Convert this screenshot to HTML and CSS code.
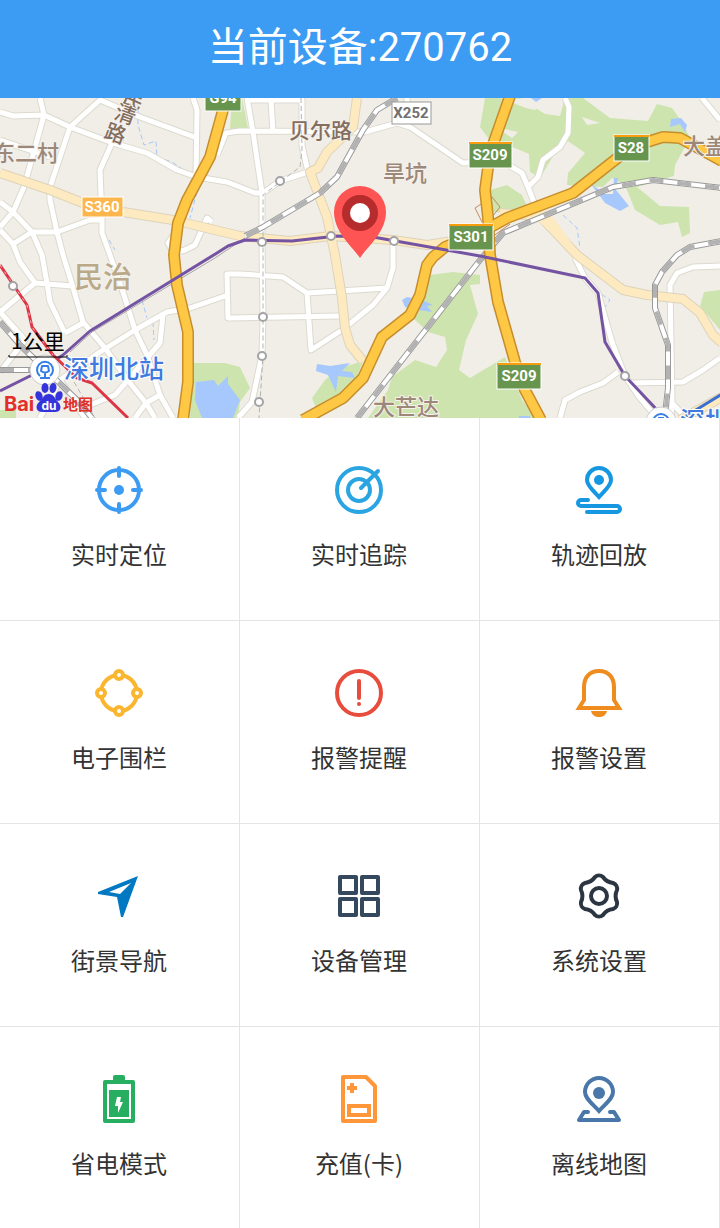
FILE: index.html
```html
<!DOCTYPE html>
<html lang="zh-CN">
<head>
    <meta charset="UTF-8">
    <meta name="viewport" content="width=device-width, initial-scale=1.0">
    <title>当前设备</title>
    <link rel="stylesheet" href="styles.css">
</head>
<body>

    <header>
        <h1>当前设备:270762</h1>
    </header>

    <main>
        <svg class="map" viewBox="0 98 720 320" preserveAspectRatio="xMidYMid slice" role="img" aria-label="地图">
            <defs>
                <!-- Minor roads -->
                <g id="streets">
                    <path d="M40 98L44 115L24 187L13 212L0 227M0 112L13 116L44 115L70 127L113 143L147 153L177 170L197 177L227 182L240 187L255 193L263 193L280 181L308 172"/>
                    <path d="M140 117L100 100L70 127L50 187L50 200L57 232L63 255L72 284L83 322L105 348L130 383L146 403L155 418M140 117L197 138M193 98L197 110L196 177L184 203L179 228L168 243L174 253L185 250L195 245L207 218L212 222"/>
                    <path d="M112 143L100 170L102 220L102 233L110 255L123 292L135 330L147 355L160 395L173 418M0 202L13 212L32 232L57 232L90 220L102 220M32 232L13 244L0 230M32 232L42 255L47 283L50 302L65 333M13 244L20 262L35 283L72 286M35 283L0 312"/>
                    <path d="M65 333L85 322M60 380L100 352L135 330L167 312L190 308L228 295M163 315L160 343L115 395L90 405M0 140L50 157M0 312L25 340L0 372M40 418L60 380L85 418M146 403L135 418M146 403L160 395"/>
                    <path d="M240 274L227 274L228 318L340 316M240 274L283 277L307 293L387 288L393 268L393 240M307 293L311 350L342 330L373 305L387 288"/>
                    <path d="M247 98L253 132L262 193L262 242L263 317L262 355L252 402L238 418M250 100L302 100L302 145L308 172M271 100L273 133M217 155L226 133L240 131L365 132L397 123L410 127L463 163L480 162M407 98L408 125"/>
                    <path d="M702 98L720 120M565 98L569 107L568 133L560 147L543 160L538 177L528 187L537 210M500 160L522 173L528 187"/>
                    <path d="M671 418L672 403L670 285L677 273L693 267L720 266M630 383L683 382L703 370L720 358M560 418L565 400L580 392L603 383L618 372M575 258L585 278L598 293L612 342L625 376L640 398L657 418M672 403L686 418"/>
                </g>
                <g id="county">
                    <path d="M0 173L50 190L83 203L123 212L173 220L240 236L290 241L330 236L393 240L427 245L460 240"/>
                    <path d="M357 98L353 127L327 152L318 168L310 172L327 217L335 255L342 298L345 328L350 345L363 361"/>
                    <path d="M500 213L540 216L577 255L623 290L647 295L683 299L700 313L713 335L722 343"/>
                    <path d="M680 420L722 397"/>
                </g>
                <g id="railways">
                    <path d="M397 98L377 110L363 130L337 177L320 193L263 227L245 236"/>
                    <path d="M357 418L480 260L503 233L527 223L613 187L653 180L722 188"/>
                    <path d="M722 241L690 247L677 255L662 272L655 285L655 308L668 345L668 388L665 414"/>
                    <path d="M0 322L20 345L77 400L92 418M0 370L30 370L45 374"/>
                </g>
                <path id="g94" d="M227 98L223 110L210 157L187 200L178 223L174 255L177 285L188 332L188 382L183 420"/>
                <path id="s28" d="M722 161L680 138L663 137L647 142L625 152L573 193L507 218L480 233L445 247L433 257L427 265L420 295L410 315L382 337L363 378L343 398L303 420"/>
                <path id="s209" d="M510 96L490 153L485 190L488 217L490 255L498 302L515 362L525 390L541 420"/>
            </defs>

            <rect class="land" y="98" width="720" height="320"/>

            <!-- Parks -->
            <g class="park">
                <path d="M228 98H242L248 128L230 130L231 112Z"/>
                <path d="M485 98H520L545 114L560 116L565 98H583L610 118L648 121L657 104L672 108L682 122L690 138L675 165L674 176L637 187L660 206L689 207L690 233L682 237L678 222L660 225L635 210L625 185L612 178L603 187L567 185L568 173L585 153L568 141L555 153L540 178L530 172L529 154L510 146L500 154L480 127Z"/>
                <path d="M490 190L507 185L522 195L528 208L510 214L488 211Z"/>
                <path d="M430 275L453 272L480 275L480 284L470 285L478 314L466 340L459 370L470 378L480 372L505 357L522 400L536 418H368L388 390L392 377L415 360L436 367L447 350L445 337L428 332L413 318Z"/>
                <path d="M363 361L340 368L325 380L312 398L316 408L350 395ZM193 363L225 363L240 367L250 388L240 402L238 418H190ZM720 290L704 292L700 306L720 330ZM0 410H16V418H0Z"/>
            </g>
            <path class="land" d="M585 122L582 117L600 123L587 125ZM496 127L518 132L512 138ZM500 98L545 100L535 110L526 108Z"/>

            <!-- Water -->
            <g class="water">
                <path d="M196 382L214 380L218 386L228 376L228 384L240 400L233 418H202L195 400Z"/>
                <path d="M317 364L330 366L350 363L342 371L352 372L355 378L338 376L336 392L328 375L316 371Z"/>
                <path d="M402 300L407 297L422 300L433 305L427 306L432 312L418 310L405 307Z"/>
                <path d="M591 184L605 194L613 194L614 178L618 178L616 190L629 206L620 211L605 203ZM671 119L681 118L687 125L685 132L680 124L670 127ZM531 98H542L536 102ZM519 416H530V418H519Z"/>
            </g>
            <path class="stream" d="M138 103L138 125L144 145L156 141L157 157L172 162L184 170M122 136L125 145M197 192L190 218M109 240L115 250M563 215L577 228L580 248M595 290L610 300L605 307M142 300L147 318M153 322L154 340"/>

            <use href="#streets" class="street-edge"/>
            <use href="#streets" class="street"/>
            <use href="#county" class="county-edge"/>
            <use href="#county" class="county"/>
            <path class="county" d="M530 215L548 210L580 255Z"/>
            <path class="subway-plan" d="M301 98L302 150L300 167L263 195L263 355L259 418M70 375L95 418"/>

            <use href="#railways" class="rail-edge"/>
            <use href="#railways" class="rail"/>
            <use href="#railways" class="rail-dash"/>
            <path class="rail-thin" d="M245 238L215 258L92 332L70 352"/>

            <path class="ramp" d="M482 222L475 208L492 197L500 207L492 217M488 240L510 224"/>
            <use href="#s28" class="highway-edge"/>
            <use href="#s209" class="highway-edge"/>
            <use href="#g94" class="highway-edge"/>
            <use href="#s28" class="highway"/>
            <use href="#s209" class="highway"/>
            <use href="#g94" class="highway"/>

            <!-- Metro lines -->
            <path class="metro-purple" d="M0 391L30 376L63 355L90 331L217 253L228 246L245 240L292 241L337 236L373 237L480 256L585 278L598 293L605 342L625 376L660 413"/>
            <path class="metro-red" d="M0 265L27 305L32 327L53 355L77 378L92 383L128 418"/>
            <path class="metro-red-dash" d="M0 265L27 305L32 327L53 355"/>
            <path class="metro-blue" d="M686 416L722 394"/>
            <g class="stop">
                <circle cx="280" cy="181" r="4"/>
                <circle cx="262" cy="242" r="4"/>
                <circle cx="331" cy="236" r="4"/>
                <circle cx="394" cy="241" r="4"/>
                <circle cx="263" cy="317" r="4"/>
                <circle cx="262" cy="356" r="4"/>
                <circle cx="259" cy="402" r="4"/>
                <circle cx="13" cy="286" r="4"/>
                <circle cx="625" cy="376" r="4"/>
            </g>

            <!-- Road shields -->
            <g class="shield shield-green">
                <rect x="205" y="89" width="36" height="22"/>
                <rect x="469" y="142" width="43" height="26"/>
                <rect x="614" y="135" width="35" height="26"/>
                <rect x="449" y="224" width="44" height="26"/>
                <rect x="497" y="363" width="44" height="26"/>
            </g>
            <path class="shield-top" d="M469 143H512M614 136H649M449 225H493M497 364H541"/>
            <rect class="shield shield-orange" x="82" y="197" width="41" height="20"/>
            <rect class="shield-white" x="392" y="102" width="39" height="22"/>
            <g class="shield-text">
                <text x="223" y="103">G94</text>
                <text x="490" y="160">S209</text>
                <text x="631" y="153">S28</text>
                <text x="471" y="242">S301</text>
                <text x="519" y="381">S209</text>
                <text x="102" y="212">S360</text>
                <text x="411" y="118" class="dark">X252</text>
            </g>

            <!-- Place names -->
            <g class="place">
                <text x="-7" y="161">东二村</text>
                <text x="383" y="181">旱坑</text>
                <text x="373" y="415">大芒达</text>
                <text x="683" y="154">大盖</text>
                <text x="289" y="138" class="road-name">贝尔路</text>
                <text x="74" y="288" class="district">民治</text>
            </g>
            <g class="place road-name">
                <text transform="translate(121 102) rotate(24)">民</text>
                <text transform="translate(113 118) rotate(20)">清</text>
                <text transform="translate(103 137) rotate(20)">路</text>
            </g>

            <!-- Stations -->
            <g class="station">
                <circle cx="45" cy="370" r="15"/>
                <path d="M40 376A8 8 0 1 1 50 376M42 366H48L49 371Q45 374 41 371ZM45 373V378M40 378H50"/>
            </g>
            <g class="station">
                <circle cx="661" cy="422" r="15"/>
                <path d="M653 422A8 8 0 0 1 669 422M658 418H664"/>
            </g>
            <text class="station-name" x="64" y="378">深圳北站</text>
            <text class="station-name" x="680" y="430">深圳</text>

            <!-- Scale -->
            <text class="scale-text" x="11" y="349">1公里</text>
            <path class="scale-line" d="M9 355V357H67V355"/>

            <!-- Baidu logo -->
            <text class="baidu" x="4" y="411">Bai</text>
            <g class="paw">
                <ellipse cx="39" cy="396" rx="3.500" ry="5" transform="rotate(-20 39 396)"/>
                <ellipse cx="45" cy="388" rx="3.500" ry="5"/>
                <ellipse cx="53" cy="388" rx="3.500" ry="5" transform="rotate(10 53 388)"/>
                <ellipse cx="59" cy="396" rx="3.500" ry="5" transform="rotate(20 59 396)"/>
                <path d="M49 394C54 394 55 399 58 402C63 407 60 413 54 412H44C37 413 34 407 39 402C43 399 43 394 49 394Z"/>
            </g>
            <text class="paw-text" x="49" y="410">du</text>
            <text class="baidu-map" x="63" y="410">地图</text>

            <!-- Device marker -->
            <path class="marker" d="M360 258C352 246 334 232 334 212A26 26 0 0 1 386 212C386 232 368 246 360 258Z"/>
            <circle class="marker-ring" cx="360" cy="213" r="18"/>
            <circle class="marker-dot" cx="360" cy="213" r="10"/>
        </svg>

        <nav class="menu">
            <a href="#locate" class="item">
                <svg class="icon azure" viewBox="0 0 48 48">
                    <circle cx="24" cy="24" r="20"/>
                    <path d="M24 2V10M24 38V46M2 24H10M38 24H46"/>
                    <circle class="solid" cx="24" cy="24" r="5"/>
                </svg>
                <span>实时定位</span>
            </a>
            <a href="#track" class="item">
                <svg class="icon sky" viewBox="0 0 48 48">
                    <circle cx="24" cy="24" r="22"/>
                    <circle cx="24" cy="24" r="11"/>
                    <path d="M26 22L43 5"/>
                </svg>
                <span>实时追踪</span>
            </a>
            <a href="#replay" class="item">
                <svg class="icon blue" viewBox="0 0 48 48">
                    <path class="sharp" d="M24 31C19 25 12 20 12 14A12 12 0 0 1 36 14C36 20 29 25 24 31Z"/>
                    <circle class="solid" cx="24" cy="14" r="5"/>
                    <path d="M13 34H6A3 3 0 0 0 6 40H42A3 3 0 0 1 42 46H12"/>
                </svg>
                <span>轨迹回放</span>
            </a>
            <a href="#fence" class="item">
                <svg class="icon yellow" viewBox="0 0 48 48">
                    <circle cx="24" cy="24" r="18"/>
                    <g class="hollow">
                        <circle cx="24" cy="6" r="4"/>
                        <circle cx="42" cy="24" r="4"/>
                        <circle cx="24" cy="42" r="4"/>
                        <circle cx="6" cy="24" r="4"/>
                    </g>
                </svg>
                <span>电子围栏</span>
            </a>
            <a href="#alarms" class="item">
                <svg class="icon red" viewBox="0 0 48 48">
                    <circle cx="24" cy="24" r="22"/>
                    <path d="M24 12V29"/>
                    <circle class="solid" cx="24" cy="35" r="2"/>
                </svg>
                <span>报警提醒</span>
            </a>
            <a href="#alarm-settings" class="item">
                <svg class="icon orange" viewBox="0 0 48 48">
                    <path class="sharp" d="M24 2C14 2 9 9 9 18V31L4 39H44L39 31V18C39 9 34 2 24 2Z"/>
                    <path class="solid" d="M16 42H32C31 46 28 48 24 48C20 48 17 46 16 42Z"/>
                </svg>
                <span>报警设置</span>
            </a>
            <a href="#navigate" class="item">
                <svg class="icon navy-blue" viewBox="0 0 48 48">
                    <path class="solid" d="M3 20L43 4L28 45H26L22 25L3 22ZM14 20L25 22L36 11Z"/>
                </svg>
                <span>街景导航</span>
            </a>
            <a href="#devices" class="item">
                <svg class="icon slate" viewBox="0 0 48 48">
                    <rect x="5" y="5" width="16" height="16"/>
                    <rect x="27" y="5" width="16" height="16"/>
                    <rect x="5" y="27" width="16" height="16"/>
                    <rect x="27" y="27" width="16" height="16"/>
                </svg>
                <span>设备管理</span>
            </a>
            <a href="#settings" class="item">
                <svg class="icon dark" viewBox="0 0 48 48">
                    <path d="M20 5A6 6 0 0 1 28 5A14 14 0 0 0 38 11A6 6 0 0 1 42 18A14 14 0 0 0 42 30A6 6 0 0 1 38 37A14 14 0 0 0 28 43A6 6 0 0 1 20 43A14 14 0 0 0 10 37A6 6 0 0 1 6 30A14 14 0 0 0 6 18A6 6 0 0 1 10 11A14 14 0 0 0 20 5Z"/>
                    <circle cx="24" cy="24" r="8"/>
                </svg>
                <span>系统设置</span>
            </a>
            <a href="#power" class="item">
                <svg class="icon green" viewBox="0 0 48 48">
                    <path d="M10 7H38V46H10Z"/>
                    <path class="solid" d="M20 0H28Q30 0 30 2V6H18V2Q18 0 20 0ZM14 15H34V42H14ZM22 22L20 31H23V38L28 27H25L26 22Z"/>
                </svg>
                <span>省电模式</span>
            </a>
            <a href="#recharge" class="item">
                <svg class="icon light-orange" viewBox="0 0 48 48">
                    <path d="M8 2H31L40 11V46H8Z"/>
                    <path class="sharp" d="M12 13H22M17 8V18M14 31H34V40H14Z"/>
                </svg>
                <span>充值(卡)</span>
            </a>
            <a href="#offline-map" class="item">
                <svg class="icon steel" viewBox="0 0 48 48">
                    <path class="sharp" d="M24 36C18 29 10 24 10 17A14 14 0 0 1 38 17C38 24 30 29 24 36Z"/>
                    <circle class="solid" cx="24" cy="18" r="6"/>
                    <path d="M13 37H9L4 45H44L39 37H35"/>
                </svg>
                <span>离线地图</span>
            </a>
        </nav>
    </main>

</body>
</html>
```
FILE: styles.css
```css
body {
    font-family: "Noto Sans CJK SC", sans-serif;
    margin: 0;
    padding: 0;
    background-color: #fff;
}

header {
    background-color: #3c9bf2;
    color: #fff;
    padding: 18px 0 20px;
    text-align: center;
}

h1 {
    margin: 0;
    font-family: Roboto, "Noto Sans CJK SC", sans-serif;
    font-size: 40px;
    font-weight: normal;
    line-height: 60px;
}

/* Map */
.map {
    display: block;
    width: 100%;
    height: 320px;
}

.map use,
.map path {
    stroke-linejoin: round;
}

.land {
    fill: #f1eee8;
}

.park {
    fill: #cde4ae;
}

.water {
    fill: #a6c8fd;
}

.stream {
    fill: none;
    stroke: #a6c8fd;
    stroke-dasharray: 5 3;
}

.street-edge {
    fill: none;
    stroke: #dcdace;
    stroke-width: 7;
}

.street {
    fill: none;
    stroke: #fff;
    stroke-width: 5;
}

.county-edge {
    fill: none;
    stroke: #ddd3ba;
    stroke-width: 10;
}

.county {
    fill: none;
    stroke: #feeac0;
    stroke-width: 8;
}

path.county {
    fill: #feeac0;
    stroke: none;
}

.subway-plan {
    fill: none;
    stroke: #b4b4b4;
    stroke-dasharray: 5 3;
}

.rail-edge {
    fill: none;
    stroke: #999;
    stroke-width: 6;
}

.rail {
    fill: none;
    stroke: #fff;
    stroke-width: 4;
}

.rail-dash {
    fill: none;
    stroke: #b2b2b2;
    stroke-width: 4;
    stroke-dasharray: 14 14;
}

.rail-thin {
    fill: none;
    stroke: #a5a5a5;
}

.ramp {
    fill: none;
    stroke: #c58a60;
}

.highway-edge {
    fill: none;
    stroke: #c68d2c;
    stroke-width: 12;
}

.highway {
    fill: none;
    stroke: #fec844;
    stroke-width: 9;
}

.metro-purple {
    fill: none;
    stroke: #7453a2;
    stroke-width: 3;
}

.metro-red {
    fill: none;
    stroke: #db3546;
    stroke-width: 3;
}

.metro-red-dash {
    fill: none;
    stroke: #f3b8bd;
    stroke-dasharray: 3 5;
}

.metro-blue {
    fill: none;
    stroke: #3b6fd0;
    stroke-width: 3;
}

.stop {
    fill: #fff;
    stroke: #a3a3a6;
    stroke-width: 2;
}

.shield {
    stroke: #fff;
    stroke-width: 1;
}

.shield-green {
    fill: #67954e;
}

.shield-orange {
    fill: #fcb64b;
}

.shield-white {
    fill: #fff;
    stroke: #999;
}

.shield-top {
    stroke: #f99c0d;
    stroke-width: 2;
}

.shield-text {
    font-family: Roboto, sans-serif;
    font-size: 15px;
    font-weight: bold;
    text-anchor: middle;
    fill: #fff;
}

.shield-text .dark {
    fill: #707070;
}

.place {
    font-size: 22px;
    font-weight: 500;
    fill: #9b8878;
    stroke: #f5f2ed;
    stroke-width: 2;
    paint-order: stroke;
}

.road-name {
    font-size: 21px;
    fill: #846e5f;
}

.district {
    font-size: 29px;
    fill: #b9a988;
}

.station circle {
    fill: #fff;
    stroke: #ccc;
}

.station path {
    fill: none;
    stroke: #347ee6;
    stroke-width: 2;
}

.station-name {
    font-size: 25px;
    font-weight: 500;
    fill: #417ade;
    stroke: #fff;
    stroke-width: 2;
    paint-order: stroke;
}

.scale-text {
    font-size: 21px;
    fill: #000;
}

.scale-line {
    fill: none;
    stroke: #000;
}

.baidu {
    font-family: Inter, sans-serif;
    font-size: 20px;
    font-weight: bold;
    fill: #e1302a;
}

.baidu-map {
    font-size: 15px;
    font-weight: bold;
    fill: #e1302a;
}

.paw {
    fill: #3534dc;
}

.paw-text {
    font-family: Inter, sans-serif;
    font-size: 12px;
    font-weight: bold;
    text-anchor: middle;
    fill: #fff;
}

.marker {
    fill: #ff5454;
}

.marker-ring {
    fill: #b62b2b;
}

.marker-dot {
    fill: #fff;
}

/* Menu */
.menu {
    display: grid;
    grid-template-columns: repeat(3, 1fr);
}

.item {
    display: flex;
    flex-direction: column;
    align-items: center;
    gap: 22px;
    padding: 48px 1px 48px 0;
    border-right: 1px solid #e4e4e4;
    border-bottom: 1px solid #e4e4e4;
    color: #333;
    font-size: 24px;
    line-height: 36px;
    text-decoration: none;
}

.item:nth-last-child(-n+3) {
    padding-bottom: 47px;
    border-bottom: none;
}

.icon {
    width: 48px;
    height: 48px;
    fill: none;
    stroke: currentColor;
    stroke-width: 4;
    stroke-linecap: round;
    stroke-linejoin: round;
}

.icon .sharp {
    stroke-linecap: butt;
    stroke-linejoin: miter;
}

.icon .solid {
    fill: currentColor;
    fill-rule: evenodd;
    stroke: none;
}

.icon .hollow {
    fill: #fff;
}

.azure {
    color: #3c9bf2;
}

.sky {
    color: #2ba5e2;
}

.blue {
    color: #1597e2;
}

.yellow {
    color: #fbb630;
}

.red {
    color: #e84c3d;
}

.orange {
    color: #ef8c20;
}

.navy-blue {
    color: #0078c2;
}

.slate {
    color: #34495e;
}

.icon.dark {
    color: #2c3643;
}

.green {
    color: #27ae60;
}

.light-orange {
    color: #ff973a;
}

.steel {
    color: #4a77a9;
}
```
